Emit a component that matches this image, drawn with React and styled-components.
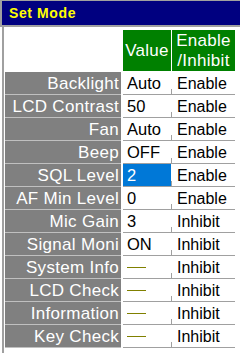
import React from "react";
import styled, { createGlobalStyle } from "styled-components";

const GlobalStyle = createGlobalStyle`
  html, body {
    margin: 0;
    padding: 0;
    background: #ffffff;
    width: 240px;
    height: 353px;
    overflow: hidden;
  }
  body {
    font-family: "Liberation Sans", Arial, sans-serif;
  }
`;

const Screen = styled.div`
  width: 240px;
  height: 353px;
  display: flex;
  flex-direction: column;
`;

const TitleBar = styled.div`
  height: 24px;
  background: #000080;
  border-top: 1px solid #a0a0a0;
  border-left: 2px solid #a0a0a0;
  border-bottom: 2px solid #a0a0a0;
  color: #ffff00;
  font-family: "Liberation Sans", Arial, sans-serif;
  font-weight: bold;
  font-size: 14px;
  line-height: 24px;
  padding-left: 7px;
  letter-spacing: 0.6px;
`;

const Body = styled.div`
  flex: 1;
  padding-left: 2px;
  display: flex;
`;

const Frame = styled.div`
  flex: 1;
  border-left: 2px solid #a0a0a0;
  padding: 3px 0 0 1px;
`;

const Table = styled.div`
  display: grid;
  grid-template-columns: 116px 49px 63px;
  column-gap: 1px;
  font-size: 16px;
`;

const Blank = styled.div``;

const HeadCell = styled.div`
  background: #008000;
  color: #ffffff;
  height: 41px;
  margin-bottom: 1px;
  display: flex;
  align-items: center;
  justify-content: center;
  text-align: center;
  font-size: 17px;
  line-height: 20px;
  letter-spacing: 0.3px;
  margin-left: ${(p) => (p.$first ? "1px" : "0")};
`;

const Label = styled.div`
  background: #808080;
  color: #ffffff;
  height: 22px;
  line-height: 23px;
  border-bottom: 1px solid #c0c0c0;
  text-align: right;
  padding-right: 2px;
  font-size: 17px;
  letter-spacing: 0.3px;
  white-space: nowrap;
`;

const Value = styled.div`
  height: 22px;
  line-height: 23px;
  border-bottom: 1px solid #a0a0a0;
  padding-left: 4px;
  margin-left: 1px;
  font-size: 16.5px;
  background: ${(p) => (p.$active ? "#0078d7" : "#ffffff")};
  color: ${(p) => (p.$active ? "#ffffff" : "#000000")};
  display: flex;
  align-items: center;
`;

const Dash = styled.span`
  display: block;
  width: 19px;
  height: 1px;
  background: #808000;
`;

const Flag = styled.div`
  position: relative;
  height: 22px;
  line-height: 23px;
  border-bottom: 1px solid #a0a0a0;
  padding-left: 5px;
  font-size: 16px;

  &::before {
    content: "";
    position: absolute;
    left: -1px;
    bottom: -1px;
    width: 1px;
    height: 6px;
    background: #a0a0a0;
  }
`;

const rows = [
  ["Backlight", "Auto", "Enable"],
  ["LCD Contrast", "50", "Enable"],
  ["Fan", "Auto", "Enable"],
  ["Beep", "OFF", "Enable"],
  ["SQL Level", "2", "Enable", true],
  ["AF Min Level", "0", "Enable"],
  ["Mic Gain", "3", "Inhibit"],
  ["Signal Moni", "ON", "Inhibit"],
  ["System Info", null, "Inhibit"],
  ["LCD Check", null, "Inhibit"],
  ["Information", null, "Inhibit"],
  ["Key Check", null, "Inhibit"],
];

export default function App() {
  return (
    <Screen>
      <GlobalStyle />
      <TitleBar>Set Mode</TitleBar>
      <Body>
        <Frame>
          <Table>
            <Blank />
            <HeadCell $first>Value</HeadCell>
            <HeadCell>
              Enable
              <br />
              /Inhibit
            </HeadCell>
            {rows.map(([name, val, flag, active]) => (
              <React.Fragment key={name}>
                <Label>{name}</Label>
                <Value $active={active}>{val === null ? <Dash /> : val}</Value>
                <Flag>{flag}</Flag>
              </React.Fragment>
            ))}
          </Table>
        </Frame>
      </Body>
    </Screen>
  );
}
